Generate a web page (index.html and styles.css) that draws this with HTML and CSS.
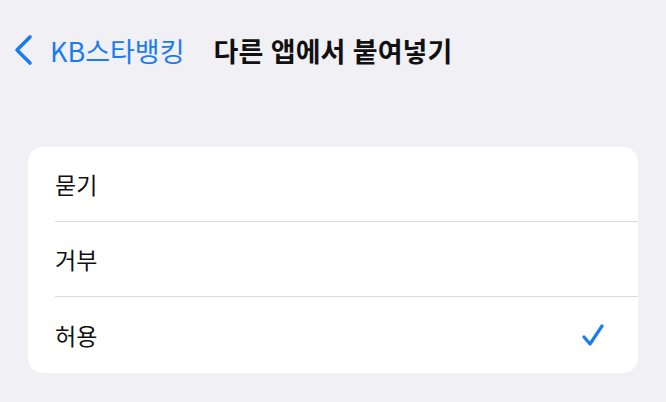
FILE: index.html
```html
<!DOCTYPE html>
<html lang="ko">
<head>
    <meta charset="UTF-8">
    <meta name="viewport" content="width=device-width, initial-scale=1.0">
    <title>다른 앱에서 붙여넣기</title>
    <link rel="stylesheet" href="styles.css">
</head>
<body>
    <header class="nav">
        <a class="back" href="#">
            <svg class="chevron" width="22" height="32" viewBox="0 0 22 32">
                <path d="M18 3 L5 16 L18 29" fill="none" stroke="currentColor" stroke-width="3.6" stroke-linecap="round" stroke-linejoin="round"/>
            </svg>
            <span>KB스타뱅킹</span>
        </a>
        <h1 class="title">다른 앱에서 붙여넣기</h1>
    </header>
    <main>
        <ul class="options">
            <li class="option">묻기</li>
            <li class="option">거부</li>
            <li class="option selected">
                허용
                <svg class="check" width="22" height="23" viewBox="0 0 22 23">
                    <path d="M2 13 L8 20 L20 2" fill="none" stroke="currentColor" stroke-width="3.2" stroke-linecap="round" stroke-linejoin="round"/>
                </svg>
            </li>
        </ul>
    </main>
</body>
</html>
```

FILE: styles.css
```css
body {
    font-family: "Noto Sans CJK KR", "Noto Sans", sans-serif;
    margin: 0;
    padding: 0;
    background: #f0f0f5;
    color: #111;
    width: 666px;
    height: 402px;
    overflow: hidden;
}
.nav {
    display: flex;
    align-items: center;
    height: 40px;
    padding: 30px 0 0 12px;
}
.back {
    display: flex;
    align-items: center;
    gap: 16px;
    color: #1b7cf2;
    text-decoration: none;
    font-size: 27px;
    line-height: 1;
}
.chevron {
    display: block;
}
.title {
    margin: 0 0 0 29px;
    font-size: 27px;
    line-height: 1;
    font-weight: 700;
}
main {
    padding: 77px 28px 0 28px;
}
.options {
    list-style: none;
    margin: 0;
    padding: 0 0 0 27px;
    background: #fff;
    border-radius: 15px;
}
.option {
    display: flex;
    align-items: center;
    justify-content: space-between;
    height: 74px;
    padding-right: 34px;
    font-size: 23px;
    border-bottom: 1px solid #d9d9de;
}
.option:last-child {
    border-bottom: none;
    height: 76px;
}
.check {
    color: #1b7cf2;
    display: block;
}
```
